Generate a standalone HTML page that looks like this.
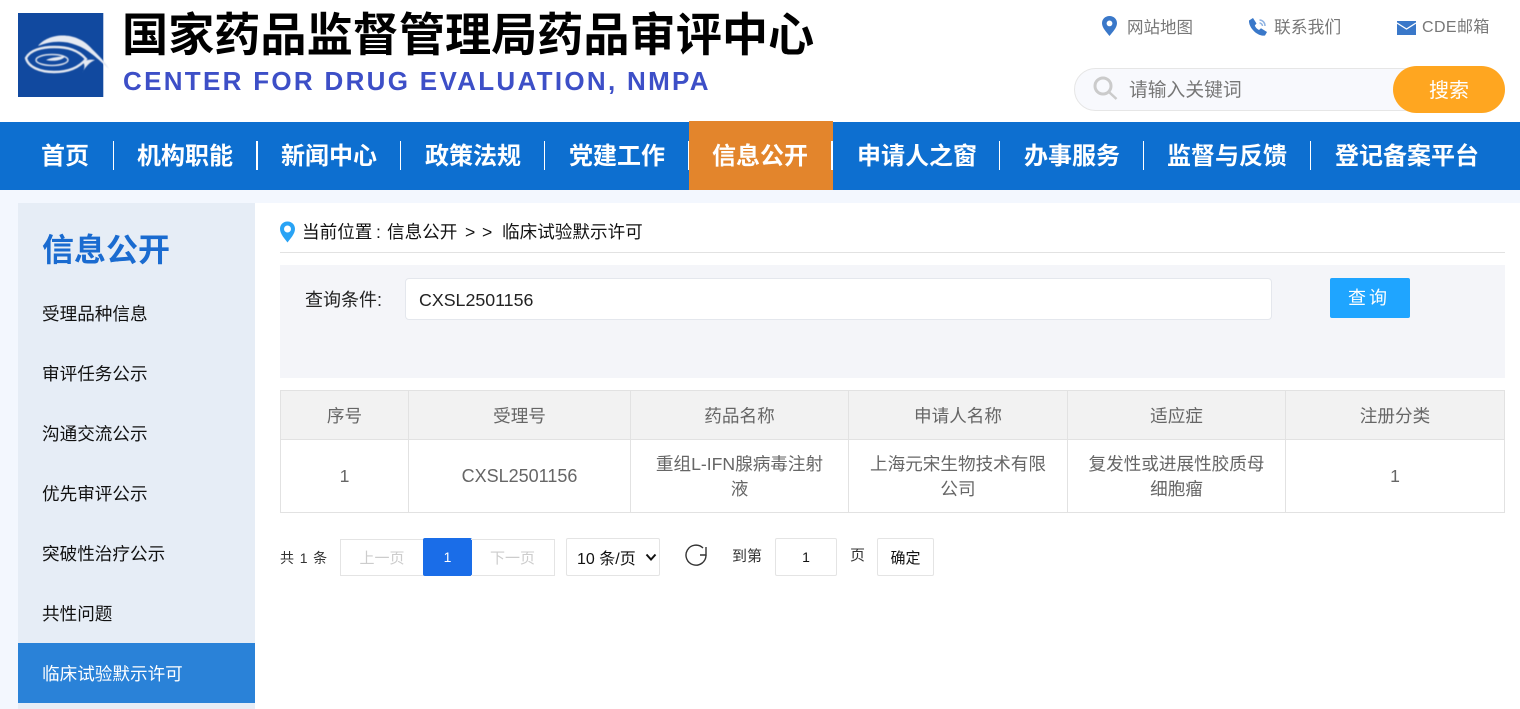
<!DOCTYPE html>
<html lang="zh"><head><meta charset="utf-8"><title>信息公开</title>
<style>
*{box-sizing:border-box}
html,body{margin:0;padding:0;width:1520px;height:709px;overflow:hidden;background:#fff;font-family:"Liberation Sans","Noto Sans CJK SC",sans-serif}
.a{position:absolute;white-space:nowrap}
.nav{position:absolute;left:0;top:122px;width:1520px;height:68px;background:#0d6fd0}
.nv{position:absolute;top:1px;height:68px;line-height:68px;font-size:24px;font-weight:bold;color:#fff;white-space:nowrap}
.sep{position:absolute;top:19px;width:1px;height:29px;background:#fff}
.side{position:absolute;left:42px;font-size:17.6px;color:#111;white-space:nowrap;line-height:24px}
.th,.td{position:absolute;display:flex;align-items:center;justify-content:center;text-align:center;color:#666;font-size:17.6px;line-height:25px}
.th{top:392px;height:48px}
.td{top:441px;height:72px;padding:0 15px}
.ln{position:absolute;background:#e2e2e2}
.pg{position:absolute;top:538px;height:38px;border:1px solid #e4e4e4;display:flex;align-items:center;justify-content:center;font-size:15px}
.bc{position:absolute;top:220px;font-size:17.6px;line-height:24px;color:#111;white-space:nowrap}
</style></head><body>
<svg class="a" style="left:18px;top:13px;overflow:visible" width="85" height="84" viewBox="0 0 85 84"><rect width="85" height="84" fill="#11499f"/>
<path d="M85 0H86V84H85Z" fill="#b8c8e4"/>
<g style="filter:blur(.5px)">
<path d="M8 45C12 37 24 34 36 34C50 34 60 37 68 46C60 56 48 59 36 59C22 59 10 54 8 45Z" fill="none" stroke="#e4e8f0" stroke-width="2.400"/>
<path d="M20 33C30 20 58 17 74 36C82 44 88 50 91 56C80 46 70 36 58 32C46 27 32 28 20 33Z" fill="#e6eaf2"/>
<path d="M64 60C67 56 67 52 65 49C68 47 72 46 77 47C72 49 68 53 64 60Z" fill="#e6eaf2"/>
<ellipse cx="34" cy="47" rx="16" ry="5.500" fill="none" stroke="#d8deea" stroke-width="1.500"/>
<path d="M28 47C34 44 42 44 47 43C46 47 36 49 28 47Z" fill="#e6eaf2"/>
</g></svg>
<div class="a" style="left:122px;top:7px;font-size:46.15px;line-height:56px;font-weight:bold;color:#000">国家药品监督管理局药品审评中心</div>
<div class="a" style="left:123px;top:65px;font-size:26px;line-height:32px;font-weight:bold;color:#3d4fc7;letter-spacing:2.3px">CENTER FOR DRUG EVALUATION, NMPA</div>

<svg class="a" style="left:1101px;top:15px" width="17" height="22" viewBox="0 0 17 22"><path fill-rule="evenodd" d="M8.500 1C4 1 1 4.300 1 8.200C1 13 6 17.500 8.500 21C11 17.500 16 13 16 8.200C16 4.300 13 1 8.500 1ZM8.500 5.500A2.900 2.900 0 1 1 8.500 11.300A2.900 2.900 0 1 1 8.500 5.500Z" fill="#3a78c9"/></svg>
<div class="a" style="left:1127px;top:17px;font-size:16.5px;line-height:22px;color:#777">网站地图</div>
<svg class="a" style="left:1248px;top:17px" width="20" height="20" viewBox="0 0 20 20"><path d="M1 3.500L5 1L8.500 6.500L6.800 8.500C7.500 10.500 9 12 11 13L13 11.300L19 15L17 18.500C10 20 0.500 11 1 3.500Z" fill="#3a78c9"/><path d="M11.500 3C14.500 3 17 5.500 17 9M11.500 6C13 6 14.500 7.500 14.500 9" fill="none" stroke="#8fb3e2" stroke-width="1.500"/></svg>
<div class="a" style="left:1274px;top:17px;font-size:16.800px;line-height:22px;color:#777">联系我们</div>
<svg class="a" style="left:1397px;top:21px" width="19" height="14" viewBox="0 0 19 14"><rect width="19" height="14" fill="#3a78c9"/><path d="M0 2L9.500 8L19 2" fill="none" stroke="#fff" stroke-width="1.300"/></svg>
<div class="a" style="left:1422px;top:17px;font-size:16px;line-height:22px;color:#777;letter-spacing:.4px">CDE邮箱</div>

<div class="a" style="left:1074px;top:68px;width:360px;height:43px;border:1px solid #e6e6e6;border-radius:22px;background:#f8f9fd"></div>
<svg class="a" style="left:1093px;top:76px" width="26" height="26" viewBox="0 0 26 26"><circle cx="10" cy="10" r="8" fill="none" stroke="#cbcbcb" stroke-width="3"/><path d="M16.500 16.500L23.500 23" stroke="#cbcbcb" stroke-width="2.500"/></svg>
<div class="a" style="left:1129px;top:77px;font-size:18.800px;line-height:26px;color:#777">请输入关键词</div>
<div class="a" style="left:1393px;top:66px;width:112px;height:47px;border-radius:24px;background:#ffa620;color:#fff;font-size:20px;line-height:51px;text-align:center">搜索</div>

<div class="nav">
<div class="a" style="left:689px;top:-1px;width:144px;height:69px;background:#e3852c"></div>
<div class="nv" style="left:41px">首页</div><div class="sep" style="left:113px"></div>
<div class="nv" style="left:137px">机构职能</div><div class="sep" style="left:256px;width:2px"></div>
<div class="nv" style="left:281px">新闻中心</div><div class="sep" style="left:400px"></div>
<div class="nv" style="left:425px">政策法规</div><div class="sep" style="left:544px"></div>
<div class="nv" style="left:569px">党建工作</div><div class="sep" style="left:688px"></div>
<div class="nv" style="left:712px">信息公开</div><div class="sep" style="left:831px;width:2px"></div>
<div class="nv" style="left:857px">申请人之窗</div><div class="sep" style="left:999px"></div>
<div class="nv" style="left:1024px">办事服务</div><div class="sep" style="left:1143px"></div>
<div class="nv" style="left:1167px">监督与反馈</div><div class="sep" style="left:1310px"></div>
<div class="nv" style="left:1335px">登记备案平台</div>
</div>

<div class="a" style="left:0;top:190px;width:1520px;height:519px;background:#f3f7fe"></div>
<div class="a" style="left:255px;top:203px;width:1265px;height:506px;background:#fff"></div>
<div class="a" style="left:18px;top:203px;width:237px;height:506px;background:#e6edf6"></div>
<div class="a" style="left:42px;top:231px;font-size:32px;line-height:38px;font-weight:bold;color:#1a6bd0">信息公开</div>
<div class="side" style="top:302px">受理品种信息</div>
<div class="side" style="top:362px">审评任务公示</div>
<div class="side" style="top:422px">沟通交流公示</div>
<div class="side" style="top:482px">优先审评公示</div>
<div class="side" style="top:542px">突破性治疗公示</div>
<div class="side" style="top:602px">共性问题</div>
<div class="a" style="left:18px;top:643px;width:237px;height:60px;background:#2a82d8"></div>
<div class="side" style="top:662px;color:#fff">临床试验默示许可</div>

<svg class="a" style="left:279px;top:221px" width="17" height="22" viewBox="0 0 17 22"><path fill-rule="evenodd" d="M8.500 0.500C3.800 0.500 1 4 1 8C1 13 6 18 8.500 21.500C11 18 16 13 16 8C16 4 13.200 0.500 8.500 0.500ZM8.500 4.500A3.500 3.500 0 1 1 8.500 11.500A3.500 3.500 0 1 1 8.500 4.500Z" fill="#29a3f5"/></svg>
<div class="bc" style="left:302px">当前位置</div><div class="bc" style="left:376px">:</div><div class="bc" style="left:387px">信息公开</div><div class="bc" style="left:465px">&gt;</div><div class="bc" style="left:482px">&gt;</div><div class="bc" style="left:502px">临床试验默示许可</div>
<div class="ln" style="left:280px;top:252px;width:1225px;height:1px"></div>

<div class="a" style="left:280px;top:265px;width:1225px;height:113px;background:#f4f5f9"></div>
<div class="a" style="left:305px;top:288px;font-size:18px;line-height:24px;color:#222">查询条件:</div>
<div class="a" style="left:405px;top:278px;width:867px;height:42px;background:#fff;border:1px solid #e4e7ed;border-radius:4px;padding-left:13px;font-size:17.800px;line-height:42px;color:#222">CXSL2501156</div>
<div class="a" style="left:1330px;top:278px;width:80px;height:40px;background:#1fa5ff;border-radius:2px;color:#fff;font-size:18px;line-height:41px;text-align:center;letter-spacing:3px;padding-right:2px">查询</div>

<div class="a" style="left:280px;top:390px;width:1225px;height:50px;background:#f2f2f2"></div>
<div class="ln" style="left:280px;top:390px;width:1225px;height:1px"></div>
<div class="ln" style="left:280px;top:439px;width:1225px;height:1px"></div>
<div class="ln" style="left:280px;top:512px;width:1225px;height:1px"></div>
<div class="ln" style="left:280px;top:390px;width:1px;height:123px"></div>
<div class="ln" style="left:408px;top:390px;width:1px;height:123px"></div>
<div class="ln" style="left:630px;top:390px;width:1px;height:123px"></div>
<div class="ln" style="left:848px;top:390px;width:1px;height:123px"></div>
<div class="ln" style="left:1067px;top:390px;width:1px;height:123px"></div>
<div class="ln" style="left:1285px;top:390px;width:1px;height:123px"></div>
<div class="ln" style="left:1504px;top:390px;width:1px;height:123px"></div>
<div class="th" style="left:281px;width:127px">序号</div>
<div class="th" style="left:409px;width:221px">受理号</div>
<div class="th" style="left:631px;width:217px">药品名称</div>
<div class="th" style="left:849px;width:218px">申请人名称</div>
<div class="th" style="left:1068px;width:217px">适应症</div>
<div class="th" style="left:1286px;width:218px">注册分类</div>
<div class="td" style="left:281px;width:127px;top:440px">1</div>
<div class="td" style="left:409px;width:221px;top:440px;font-size:18px">CXSL2501156</div>
<div class="td" style="left:631px;width:217px"><span>重组L-IFN腺病毒注射<br>液</span></div>
<div class="td" style="left:849px;width:218px">上海元宋生物技术有限公司</div>
<div class="td" style="left:1068px;width:217px">复发性或进展性胶质母细胞瘤</div>
<div class="td" style="left:1286px;width:218px;top:440px">1</div>

<div class="a" style="left:280px;top:548px;font-size:14px;line-height:20px;color:#333;letter-spacing:.9px">共 1 条</div>
<div class="pg" style="left:340px;width:84px;color:#ccc;top:539px;height:37px">上一页</div>
<div class="pg" style="left:423px;width:49px;background:#1a6de8;border-color:#1a6de8;border-radius:2px;color:#fff;font-size:14px">1</div>
<div class="pg" style="left:471px;width:84px;color:#ccc;border-left:0;top:539px;height:37px">下一页</div>
<div class="pg" style="left:566px;width:94px;border-radius:2px;color:#111;font-size:16px;justify-content:flex-start;padding-left:10px">10 条/页</div>
<svg class="a" style="left:645px;top:553px" width="12" height="9" viewBox="0 0 12 9"><path d="M1.500 1.500L6 6.500L10.500 1.500" fill="none" stroke="#111" stroke-width="2"/></svg>
<svg class="a" style="left:685px;top:544px" width="24" height="24" viewBox="0 0 24 24"><path d="M18 4A10 10 0 1 0 21 11.500" fill="none" stroke="#333" stroke-width="1.400"/><path d="M21 3V11H15" fill="none" stroke="#333" stroke-width="1.400"/></svg>
<div class="a" style="left:732px;top:547px;font-size:15px;line-height:20px;color:#333">到第</div>
<div class="pg" style="left:775px;width:62px;color:#111;border-radius:2px;font-size:14px">1</div>
<div class="a" style="left:850px;top:546px;font-size:15px;line-height:20px;color:#333">页</div>
<div class="pg" style="left:877px;width:57px;color:#111;border-radius:2px">确定</div>
</body></html>
